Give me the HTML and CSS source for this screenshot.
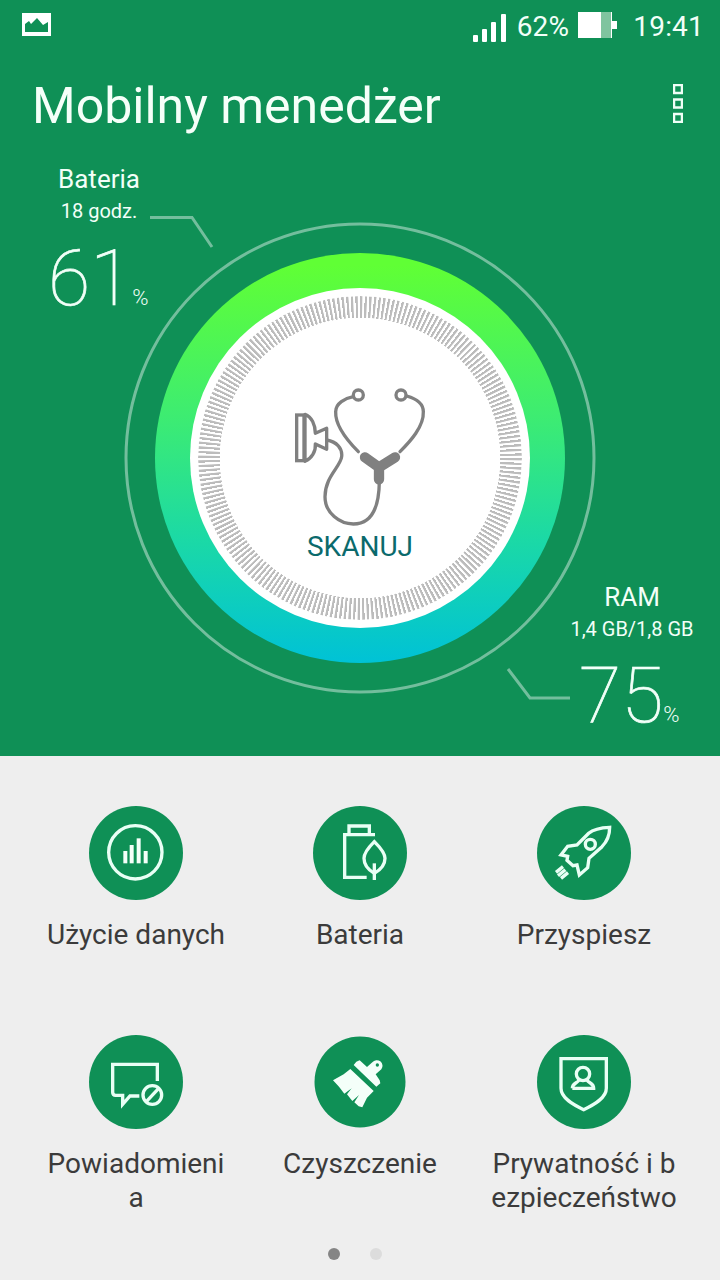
FILE: index.html
```html
<!DOCTYPE html>
<html lang="pl">
<head>
<meta charset="utf-8">
<title>Mobilny menedżer</title>
<link rel="stylesheet" href="styles.css">
</head>
<body>
<main class="screen">
  <section class="top">
    <header class="status">
      <svg class="st-image" viewBox="0 0 29 23"><path class="white" fill-rule="evenodd" d="M0 0H29V23H0ZM3 19H26V9L21 12L15 5L9 11L7 8L3 11Z"/></svg>
      <span class="status-gap"></span>
      <svg class="st-signal" viewBox="0 0 33 28">
        <rect class="white" x="0" y="21" width="5" height="7" rx="1"/>
        <rect class="white" x="9" y="15" width="5" height="13" rx="1"/>
        <rect class="white" x="18" y="8" width="5" height="20" rx="1"/>
        <rect class="white" x="28" y="0" width="5" height="28" rx="1"/>
      </svg>
      <span class="st-text st-pct">62%</span>
      <svg class="st-batt" viewBox="0 0 39 26">
        <rect class="white" x="0" y="0" width="23" height="26"/>
        <rect class="batt-empty" x="23" y="0" width="10" height="26"/>
        <rect class="white" x="33" y="0" width="1" height="26"/>
        <rect class="white" x="33" y="9" width="6" height="8"/>
      </svg>
      <span class="st-text st-time">19:41</span>
    </header>
    <div class="titlebar">
      <h1 class="title">Mobilny menedżer</h1>
      <svg class="menu" viewBox="0 0 10 39">
        <rect class="menu-dot" x="1" y="1" width="8" height="8"/>
        <rect class="menu-dot" x="1" y="15.500" width="8" height="8"/>
        <rect class="menu-dot" x="1" y="30" width="8" height="8"/>
      </svg>
    </div>
    <div class="gauge">
      <svg class="dial" viewBox="0 150 720 606">
        <defs>
          <linearGradient id="ringGrad" x1="0" y1="0" x2="0" y2="1">
            <stop offset="0.03" stop-color="#60ff35"/>
            <stop offset="0.4" stop-color="#3dec72"/>
            <stop offset="0.7" stop-color="#1bd9a6"/>
            <stop offset="1" stop-color="#00c2d6"/>
          </linearGradient>
        </defs>
        <circle class="orbit" cx="360" cy="458" r="234"/>
        <polyline class="leader" points="150,217.500 192,217.500 212,247"/>
        <polyline class="leader" points="508,669 530,698 570,698"/>
        <circle cx="360" cy="458" r="205" fill="url(#ringGrad)"/>
        <circle class="disc" cx="360" cy="458" r="170"/>
        <g transform="translate(270 370) scale(.33333)">
          <rect class="st-line" x="80" y="135" width="22" height="137"/>
          <path class="st-solid" d="M105 133C125 140 136 165 136 190L170 175V238L136 222C138 245 125 265 105 274Z"/>
          <path class="st-line" d="M170 210C200 215 218 235 215 260C212 290 165 320 165 380C165 430 210 462 250 462C300 462 327 420 328 335"/>
          <path class="st-y" d="M285 262L327 292L375 262M327 292V328"/>
          <path class="st-line" d="M265 245C235 215 195 170 197 125C197 100 225 85 250 80"/>
          <path class="st-line" d="M390 245C420 215 462 170 460 125C460 100 435 85 410 78"/>
          <circle class="st-line" cx="265" cy="75" r="15"/>
          <circle class="st-line" cx="393" cy="75" r="15"/>
        </g>
      </svg>
      <div class="ticks"></div>
      <span class="scan">SKANUJ</span>
      <div class="stat stat-batt">
        <div class="stat-name">Bateria</div>
        <div class="stat-sub">18 godz.</div>
        <div class="stat-value"><span class="num">61</span><span class="unit">%</span></div>
      </div>
      <div class="stat stat-ram">
        <div class="stat-name">RAM</div>
        <div class="stat-sub">1,4 GB/1,8 GB</div>
        <div class="stat-value"><span class="num">75</span><span class="unit">%</span></div>
      </div>
    </div>
  </section>

  <section class="bottom">
    <div class="grid">
      <div class="tile">
        <svg class="icon" viewBox="0 0 282 282">
          <circle class="badge" cx="141" cy="141" r="141"/>
          <g transform="translate(33 27)">
            <circle class="line" cx="106" cy="112" r="80"/>
            <rect class="fill" x="70" y="108" width="12" height="37"/>
            <rect class="fill" x="89" y="90" width="12" height="55"/>
            <rect class="fill" x="110" y="70" width="12" height="75"/>
            <rect class="fill" x="131" y="108" width="12" height="37"/>
          </g>
        </svg>
        <div class="label">Użycie danych</div>
      </div>
      <div class="tile">
        <svg class="icon" viewBox="0 0 282 282">
          <circle class="badge" cx="141" cy="141" r="141"/>
          <g transform="translate(36 27)">
            <path class="line" d="M150 59H59V187H125"/>
            <path class="line" d="M72 55V33H133V59"/>
            <path class="line" d="M148 80C128 100 117 115 117 130C117 150 130 165 148 175C166 165 180 150 180 130C180 115 168 100 148 80Z"/>
            <path class="line" d="M148 145V195"/>
          </g>
        </svg>
        <div class="label">Bateria</div>
      </div>
      <div class="tile">
        <svg class="icon" viewBox="0 0 282 282">
          <circle class="badge" cx="141" cy="141" r="141"/>
          <g transform="translate(30 27)">
            <path class="line" d="M188 37C160 38 140 42 125 55L90 90L62 94L42 120L62 124L60 136L78 152L90 150L97 180L122 158L126 130L165 95C180 80 188 60 188 37Z"/>
            <circle class="line" cx="130" cy="88" r="15"/>
            <path class="line" d="M48 155L27 172M55 164L33 182M63 173L42 190"/>
          </g>
        </svg>
        <div class="label">Przyspiesz</div>
      </div>
      <div class="tile">
        <svg class="icon" viewBox="0 0 282 282">
          <circle class="badge" cx="141" cy="141" r="141"/>
          <g transform="translate(33 30)">
            <path class="line" d="M172 108V58H38V142Q38 151 47 151H68V178L90 153H118"/>
            <circle class="line" cx="157" cy="150" r="28"/>
            <path class="line" d="M139 170L176 130"/>
          </g>
        </svg>
        <div class="label">Powiadomieni<br>a</div>
      </div>
      <div class="tile">
        <svg class="icon" viewBox="0 0 282 282">
          <circle class="badge" cx="141" cy="141" r="136.500"/>
          <g transform="translate(30 30)">
            <path class="fill" d="M100 50L110 46L132 66L148 52A17 17 0 0 1 175 73L158 88L170 106L172 115L160 125L92 60Z"/>
            <circle class="hole" cx="163" cy="60" r="5"/>
            <path class="fill" d="M82 72L152 138L132 158L118 187L107 184L94 172L108 150L88 168L72 148L86 130L64 146L48 125L30 106L62 88Z"/>
          </g>
        </svg>
        <div class="label">Czyszczenie</div>
      </div>
      <div class="tile">
        <svg class="icon" viewBox="0 0 282 282">
          <circle class="badge" cx="141" cy="141" r="141"/>
          <g transform="translate(30 30)">
            <path class="line" d="M42 41H178V130C178 160 140 180 110 194C80 180 42 160 42 130Z"/>
            <circle class="line" cx="108" cy="87" r="20"/>
            <path class="line" d="M76 130C76 113 92 115 96 105M120 105C125 115 140 113 140 130H76"/>
          </g>
        </svg>
        <div class="label">Prywatność i b<br>ezpieczeństwo</div>
      </div>
    </div>
    <div class="pager">
      <span class="page page-on"></span>
      <span class="page"></span>
    </div>
  </section>
</main>
</body>
</html>
```

FILE: styles.css
```css
* { box-sizing: border-box; }
html, body { margin: 0; padding: 0; }
body {
  width: 720px;
  height: 1280px;
  overflow: hidden;
  background: #eeeeee;
  font-family: Roboto, "Noto Sans", sans-serif;
}
.screen { display: flex; flex-direction: column; width: 720px; height: 1280px; }

.top { height: 756px; background: #0f9056; color: #f2fff8; display: flex; flex-direction: column; }

.status { height: 50px; display: flex; align-items: flex-start; padding: 13px 16px 0 22px; }
.status-gap { flex: 1; }
.st-image { width: 29px; height: 23px; }
.st-signal { width: 33px; height: 28px; margin-top: 1px; }
.st-batt { width: 39px; height: 26px; margin: -1px 16px 0 9px; }
.st-text { font-size: 28px; line-height: 28px; letter-spacing: 0.2px; }
.st-pct { margin-left: 11px; }
.white { fill: #ffffff; }
.batt-empty { fill: #7fc49f; }

.titlebar { height: 100px; display: flex; align-items: flex-start; justify-content: space-between; padding: 26px 37px 0 32px; }
.title { margin: 0; font-size: 50px; font-weight: 400; line-height: 60px; color: #f5fff9; }
.menu { width: 10px; height: 39px; margin-top: 8px; }
.menu-dot { fill: none; stroke: #f0fff7; stroke-width: 2.5; }

.gauge { position: relative; height: 606px; }
.dial { display: block; width: 720px; height: 606px; }
.orbit, .leader { fill: none; stroke: #ffffff; stroke-opacity: 0.42; stroke-width: 3; }
.disc { fill: #ffffff; }
.ticks {
  position: absolute;
  left: 198px;
  top: 146px;
  width: 324px;
  height: 324px;
  border-radius: 50%;
  background: repeating-conic-gradient(#bcbcbc 0deg 0.7deg, rgba(188, 188, 188, 0) 1deg 1.6667deg);
  -webkit-mask: radial-gradient(circle closest-side, transparent 140px, #000 140.5px);
  mask: radial-gradient(circle closest-side, transparent 140px, #000 140.5px);
}
.st-line { fill: none; stroke: #808080; stroke-width: 10; stroke-linecap: round; }
.st-solid { fill: none; stroke: #808080; stroke-width: 10; stroke-linejoin: round; }
.st-y { fill: none; stroke: #808080; stroke-width: 31; stroke-linecap: round; stroke-linejoin: round; }
.scan { position: absolute; left: 260px; top: 379px; width: 200px; text-align: center; font-size: 28px; line-height: 36px; color: #0b6a6c; }

.stat { position: absolute; text-align: center; }
.stat-name { font-size: 26px; line-height: 30px; }
.stat-sub { font-size: 20px; line-height: 24px; margin-top: 5px; }
.stat-value { display: flex; align-items: baseline; }
.num { font-size: 77px; font-weight: 100; -webkit-text-stroke: 0.7px #f2fff8; line-height: 84px; }
.unit { font-size: 22px; font-weight: 300; }
.stat-batt { left: 47px; top: 14px; width: 104px; }
.stat-batt .stat-value { margin: 14px 0 0 1px; }
.stat-batt .unit { margin-left: 0; }
.stat-ram { left: 570px; top: 432px; width: 124px; }
.stat-ram .stat-value { margin: 13px 0 0 9px; }

.bottom { flex: 1; background: #eeeeee; display: flex; flex-direction: column; padding: 50px 24px 0; }
.grid { display: grid; grid-template-columns: repeat(3, 224px); row-gap: 83px; }
.tile { display: flex; flex-direction: column; align-items: center; }
.icon { width: 94px; height: 94px; display: block; }
.badge, .hole { fill: #0f9056; }
.line { fill: none; stroke: #e9fff5; stroke-width: 10; }
.fill { fill: #f4fff9; }
.label { margin-top: 18px; font-size: 28px; line-height: 34px; color: #3b3b3b; text-align: center; white-space: nowrap; }

.pager { display: flex; justify-content: center; gap: 30px; margin-top: 33px; padding-right: 10px; }
.page { width: 12px; height: 12px; border-radius: 50%; background: #dcdcdc; }
.page-on { background: #858585; }
```
